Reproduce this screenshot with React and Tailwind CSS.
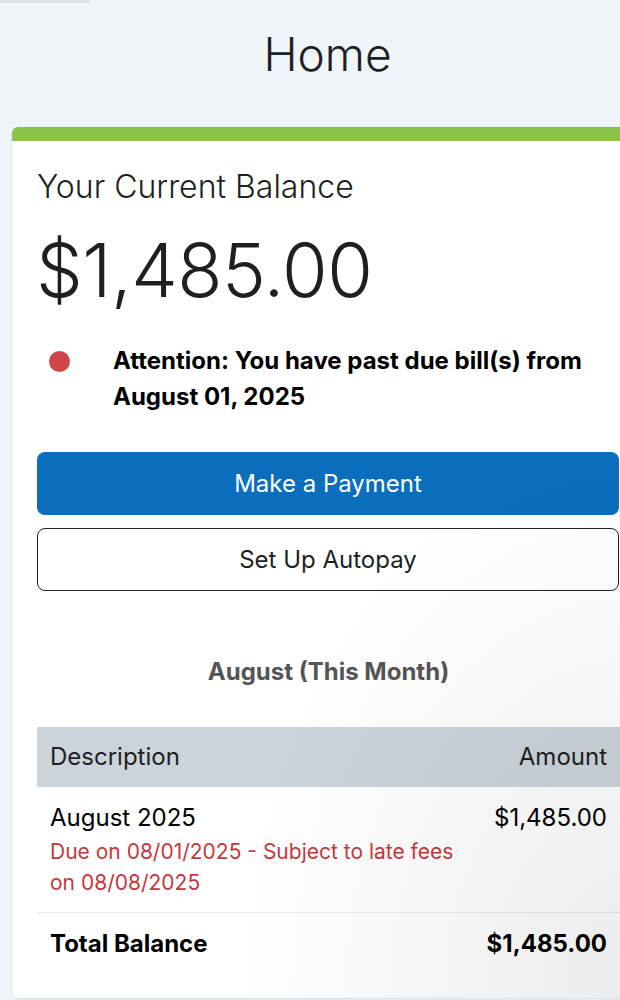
export default function App() {
  return (
    <div
      className="w-[620px] h-[1000px] overflow-hidden bg-[#eff5f9] text-[#1e1f22] relative"
      style={{ fontFamily: "Inter, 'Noto Sans', sans-serif" }}
    >
      <div className="absolute left-0 top-0 h-[3px] w-[90px] bg-[#dfe3e6]" />
      <div className="h-[127px] pt-[31px] pl-[35px] text-center">
        <h1 className="text-[46px] leading-none font-light">Home</h1>
      </div>

      <div className="ml-3 w-[620px] h-[871px] bg-white rounded-l-md overflow-hidden shadow-[0_1px_3px_rgba(0,0,0,0.12)] relative">
        <div className="h-[14px] bg-[#8bc34a]" />
        <div className="pl-[25px] relative">
          <div className="pt-[30px] text-[32px] leading-none font-light">
            Your Current Balance
          </div>
          <div className="mt-[30px] -ml-[1px] text-[74px] leading-none font-light tracking-[-0.5px]">
            $1,485.00
          </div>

          <div className="mt-[36px] flex items-start">
            <span className="mt-[8px] ml-[12px] w-[21px] h-[21px] rounded-full bg-[#d14646] shrink-0" />
            <p className="ml-[43px] text-[24px] leading-[36px] font-bold text-black">
              Attention: You have past due bill(s) from
              <br />
              August 01, 2025
            </p>
          </div>

          <button className="mt-[37px] w-[582px] h-[63px] rounded-lg bg-[#0a6ebd] text-white text-[24px] font-normal">
            Make a Payment
          </button>
          <button className="mt-[13px] w-[582px] h-[63px] rounded-lg border-[1.5px] border-[#222] bg-white text-[24px] text-[#1e1f22]">
            Set Up Autopay
          </button>

          <div className="mt-[66px] w-[583px] text-center text-[24px] leading-[30px] font-bold text-[#555]">
            August (This Month)
          </div>

          <div className="mt-[40px] w-[583px]">
            <div className="h-[60px] bg-[#ccd4db] flex items-center justify-between pl-[13px] pr-[13px] text-[24px]">
              <span>Description</span>
              <span>Amount</span>
            </div>
            <div className="flex justify-between pl-[13px] pr-[13px] pt-[16px] pb-[14px] border-b border-[#e8eaec]">
              <div>
                <div className="text-[24px] leading-[30px] text-black">August 2025</div>
                <div className="mt-[3px] text-[21px] leading-[31px] text-[#c8373d]">
                  Due on 08/01/2025 - Subject to late fees
                  <br />
                  on 08/08/2025
                </div>
              </div>
              <div className="text-[24px] leading-[30px] text-black">$1,485.00</div>
            </div>
            <div className="flex justify-between pl-[13px] pr-[13px] pt-[16px] text-[24px] leading-[30px] font-bold text-black">
              <span>Total Balance</span>
              <span>$1,485.00</span>
            </div>
          </div>
        </div>
        <div className="absolute inset-0 pointer-events-none bg-[radial-gradient(ellipse_at_bottom_right,rgba(0,0,0,0.08),transparent_45%)]" />
      </div>
    </div>
  );
}
